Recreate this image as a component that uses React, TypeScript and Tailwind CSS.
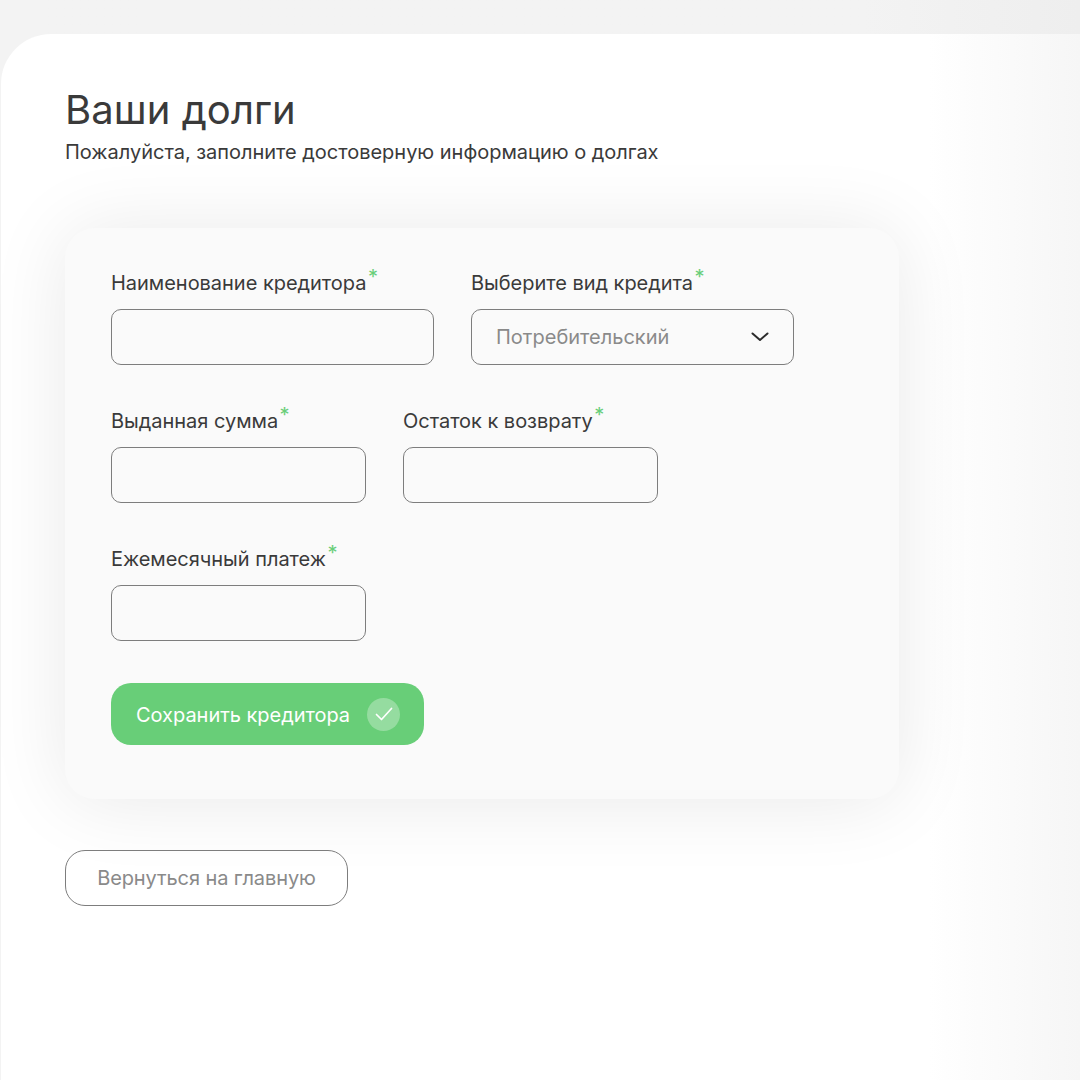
const font = { fontFamily: "Inter, 'Noto Sans', sans-serif" };

function Label({ children }: { children: string }) {
  return (
    <div className="flex h-[30px] items-start text-[20px] leading-[30px] font-normal tracking-[-0.03px] text-[#3a3a3a]">
      <span>{children}</span>
      <span className="ml-[1.5px] mt-[-6px] text-[20px] leading-[30px] text-[#68ce78]">*</span>
    </div>
  );
}

function Field({ label, width }: { label: string; width: string }) {
  return (
    <div className={`flex flex-col gap-[11px] ${width}`}>
      <Label>{label}</Label>
      <div className="h-[56px] w-full rounded-[10px] border border-[#7d7d7d]" />
    </div>
  );
}

export default function App() {
  return (
    <div
      style={font}
      className="min-h-[1080px] w-[1080px] overflow-hidden bg-gradient-to-r from-[#f3f3f3] from-80% to-[#eeeeee] pt-[34px] pl-px"
    >
      <main className="h-[1046px] rounded-tl-[50px] bg-gradient-to-r from-white from-[86%] to-[#f6f6f6] pl-[64px] pt-[51px]">
        <h1 className="text-[40px] leading-[50px] font-normal tracking-[0.05px] text-[#3a3a3a]">Ваши долги</h1>
        <p className="mt-[5px] text-[20px] leading-[24px] font-normal tracking-[-0.02px] text-[#3a3a3a]">
          Пожалуйста, заполните достоверную информацию о долгах
        </p>

        <section className="mt-[64px] flex h-[571px] w-[834px] flex-col rounded-[30px] bg-[#fafafa] px-[46px] pt-[40px] shadow-[0_2px_80px_rgba(0,0,0,0.09)]">
          <div className="flex gap-[37px]">
            <Field label="Наименование кредитора" width="w-[323px]" />
            <div className="flex w-[323px] flex-col gap-[11px]">
              <Label>Выберите вид кредита</Label>
              <div className="flex h-[56px] w-full items-center justify-between rounded-[10px] border border-[#7d7d7d] pl-[24px] pr-[23px]">
                <span className="text-[20px] font-normal text-[#8a8a8a]">Потребительский</span>
                <svg width="20" height="20" viewBox="0 0 20 20" fill="none" stroke="#2b2b2b" strokeWidth="2" strokeLinecap="round" strokeLinejoin="round">
                  <path d="M2.5 6.5 L10 13 L17.5 6.5" />
                </svg>
              </div>
            </div>
          </div>

          <div className="mt-[41px] flex gap-[37px]">
            <Field label="Выданная сумма" width="w-[255px]" />
            <Field label="Остаток к возврату" width="w-[255px]" />
          </div>

          <div className="mt-[41px] flex">
            <Field label="Ежемесячный платеж" width="w-[255px]" />
          </div>

          <button className="mt-[42px] flex h-[62px] w-[313px] items-center justify-between rounded-[20px] bg-[#68ce78] pl-[25px] pr-[24px] text-[20px] font-normal tracking-[-0.03px] text-white">
            <span className="translate-y-px">Сохранить кредитора</span>
            <span className="flex h-[33px] w-[33px] items-center justify-center rounded-full bg-[#95dca0]">
              <svg width="20" height="20" viewBox="0 0 20 20" fill="none" stroke="white" strokeWidth="1.7" strokeLinecap="round" strokeLinejoin="round">
                <path d="M2.5 10.5 L7.5 15.5 L17.5 4.5" />
              </svg>
            </span>
          </button>
        </section>

        <button className="mt-[51px] flex h-[56px] w-[283px] items-center justify-center rounded-[20px] border border-[#7d7d7d] text-[20px] font-normal tracking-[-0.1px] text-[#8a8a8a]">
          Вернуться на главную
        </button>
      </main>
    </div>
  );
}
